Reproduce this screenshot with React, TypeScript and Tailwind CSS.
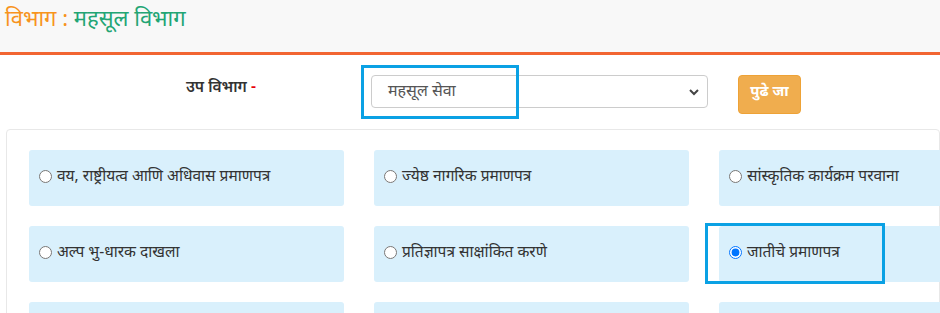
const services = [
  ["वय, राष्ट्रीयत्व आणि अधिवास प्रमाणपत्र", "ज्येष्ठ नागरिक प्रमाणपत्र", "सांस्कृतिक कार्यक्रम परवाना"],
  ["अल्प भु-धारक दाखला", "प्रतिज्ञापत्र साक्षांकित करणे", "जातीचे प्रमाणपत्र"],
  ["", "", ""],
];

export default function App() {
  return (
    <div
      className="relative w-[940px] h-[313px] overflow-hidden bg-white text-[#333]"
      style={{ fontFamily: '"Noto Sans", "Noto Sans Devanagari", "Lohit Devanagari", sans-serif' }}
    >
      {/* Header */}
      <div className="h-[55px] bg-[#f8f8f8] border-b-[3px] border-[#f26532] pl-[5px] pt-[2px]">
        <h2 className="text-[22px] leading-[30px]">
          <span className="text-[#f7941d]">विभाग :</span>{" "}
          <span className="text-[#22a574]">महसूल विभाग</span>
        </h2>
      </div>

      {/* Sub department form */}
      <div className="flex items-start pt-[20px] h-[74px]">
        <label className="w-[371px] pl-[186px] pt-[1px] text-[15.5px] font-semibold leading-[20px]">
          उप विभाग <span className="text-red-600">-</span>
        </label>
        <div className="relative w-[337px] h-[33px] border border-[#ccc] rounded-[4px] bg-white flex items-center pl-[16px] pb-[3px] text-[16px] text-[#555]">
          महसूल सेवा
          <svg className="absolute right-[8px] top-[13px]" width="10" height="7" viewBox="0 0 10 7">
            <path d="M1 1 L5 5 L9 1" fill="none" stroke="#444" strokeWidth="2" />
          </svg>
        </div>
        <button className="ml-[30px] w-[63px] h-[39px] bg-[#f0ad4e] border border-[#eea236] rounded-[4px] text-white font-bold text-[15px] leading-[20px] pb-[9px]">
          पुढे जा
        </button>
      </div>

      {/* Services */}
      <div className="ml-[6px] border border-[#e8e8e8] rounded-[4px] pt-[20px] pl-[22px]">
        <div className="grid grid-cols-[315px_315px_315px] gap-x-[30px] gap-y-[20px]">
          {services.flat().map((name, i) => (
            <div key={i} className="h-[56px] bg-[#d9f0fc] rounded-[3px] flex items-center pl-[10px] pb-[4px]">
              {name && (
                <label className="flex items-center gap-[5px] text-[15.5px]">
                  <input type="radio" name="service" defaultChecked={i === 5} className="w-[13px] h-[13px] m-0" />
                  {name}
                </label>
              )}
            </div>
          ))}
        </div>
      </div>

      {/* Highlight annotations */}
      <div className="absolute left-[361px] top-[65px] w-[158px] h-[54px] border-[3px] border-[#0aa1e4]" />
      <div className="absolute left-[705px] top-[223px] w-[180px] h-[61px] border-[3px] border-[#0aa1e4]" />
    </div>
  );
}
